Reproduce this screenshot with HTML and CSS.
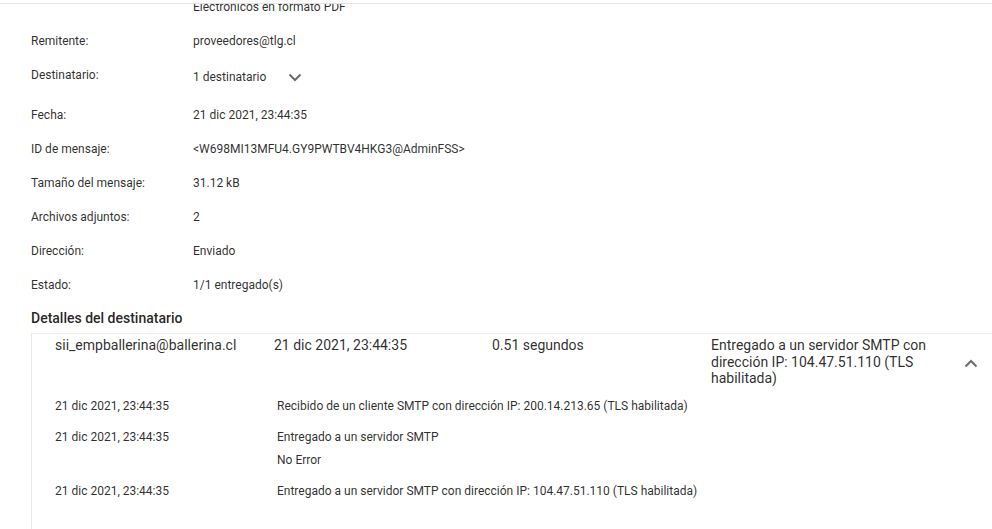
FILE: index.html
```html
<!DOCTYPE html>
<html lang="es">
<head>
<meta charset="utf-8">
<link rel="stylesheet" href="styles.css">
</head>
<body>
<div class="topbar"></div>
<div class="viewport">
  <div class="content">
    <div class="props">
      <div class="row"><div class="label"></div><div class="value">Electronicos en formato PDF</div></div>
      <div class="row"><div class="label">Remitente:</div><div class="value">proveedores@tlg.cl</div></div>
      <div class="row row-recipients">
        <div class="label">Destinatario:</div>
        <div class="value value-recipients">1 destinatario
          <svg class="chev-down" width="14" height="9" viewBox="0 0 14 9"><polyline points="1.5,1.5 7,7 12.5,1.5" fill="none" stroke="#6b6b6b" stroke-width="2"/></svg>
        </div>
      </div>
      <div class="row"><div class="label">Fecha:</div><div class="value">21 dic 2021, 23:44:35</div></div>
      <div class="row"><div class="label">ID de mensaje:</div><div class="value">&lt;W698MI13MFU4.GY9PWTBV4HKG3@AdminFSS&gt;</div></div>
      <div class="row"><div class="label">Tamaño del mensaje:</div><div class="value">31.12 kB</div></div>
      <div class="row"><div class="label">Archivos adjuntos:</div><div class="value">2</div></div>
      <div class="row"><div class="label">Dirección:</div><div class="value">Enviado</div></div>
      <div class="row"><div class="label">Estado:</div><div class="value">1/1 entregado(s)</div></div>
    </div>
    <h2 class="section-title">Detalles del destinatario</h2>
    <div class="card">
      <div class="card-head">
        <div class="cell">sii_empballerina@ballerina.cl</div>
        <div class="cell">21 dic 2021, 23:44:35</div>
        <div class="cell">0.51 segundos</div>
        <div class="cell">Entregado a un servidor SMTP con dirección IP: 104.47.51.110 (TLS habilitada)</div>
        <div class="cell cell-icon">
          <svg width="14" height="9" viewBox="0 0 14 9"><polyline points="1.5,7.5 7,2 12.5,7.5" fill="none" stroke="#6b6b6b" stroke-width="2"/></svg>
        </div>
      </div>
      <div class="events">
        <div class="event">
          <div class="ev-date">21 dic 2021, 23:44:35</div>
          <div class="ev-msg"><div>Recibido de un cliente SMTP con dirección IP: 200.14.213.65 (TLS habilitada)</div></div>
        </div>
        <div class="event">
          <div class="ev-date">21 dic 2021, 23:44:35</div>
          <div class="ev-msg"><div>Entregado a un servidor SMTP</div><div>No Error</div></div>
        </div>
        <div class="event">
          <div class="ev-date">21 dic 2021, 23:44:35</div>
          <div class="ev-msg"><div>Entregado a un servidor SMTP con dirección IP: 104.47.51.110 (TLS habilitada)</div></div>
        </div>
      </div>
    </div>
  </div>
</div>
</body>
</html>
```
FILE: styles.css
```css
html, body {
  margin: 0;
  padding: 0;
  background: #fff;
}
body {
  font-family: Roboto, "Liberation Sans", Arial, sans-serif;
  color: rgba(0, 0, 0, 0.84);
  overflow: hidden;
  height: 529px;
}
.topbar {
  height: 3px;
  border-bottom: 1px solid #e2e2e2;
}
.viewport {
  height: 525px;
  overflow: hidden;
}
.content {
  margin-top: -14px;
  padding-left: 31px;
}
.props {
  display: flex;
  flex-direction: column;
}
.row {
  display: flex;
  align-items: center;
  height: 34px;
  font-size: 12px;
  line-height: 16px;
}
.label {
  width: 162px;
  flex: none;
}
.value {
  display: flex;
  align-items: center;
}
.row-recipients {
  height: 40px;
  align-items: flex-start;
}
.row-recipients .label {
  line-height: 34px;
}
.value-recipients {
  margin-top: 11px;
}
.chev-down {
  margin-left: 22px;
  margin-top: 1px;
}
.section-title {
  margin: 0;
  height: 31px;
  font-size: 14px;
  font-weight: 500;
  line-height: 32px;
  color: rgba(0, 0, 0, 0.87);
}
.card {
  border-top: 1px solid #eeeeee;
  border-left: 1px solid #e6e6e6;
  margin-right: -20px;
  padding: 3px 0 40px 23px;
}
.card-head {
  display: grid;
  grid-template-columns: 219px 218px 219px 218px 1fr;
  font-size: 14px;
  line-height: 16.5px;
}
.cell-icon {
  display: flex;
  align-items: center;
  padding-left: 35px;
  padding-top: 4px;
}
.events {
  display: flex;
  flex-direction: column;
  gap: 8px;
  margin-top: 8px;
  font-size: 12px;
  line-height: 23px;
}
.event {
  display: flex;
}
.ev-date {
  width: 222px;
  flex: none;
}
```
